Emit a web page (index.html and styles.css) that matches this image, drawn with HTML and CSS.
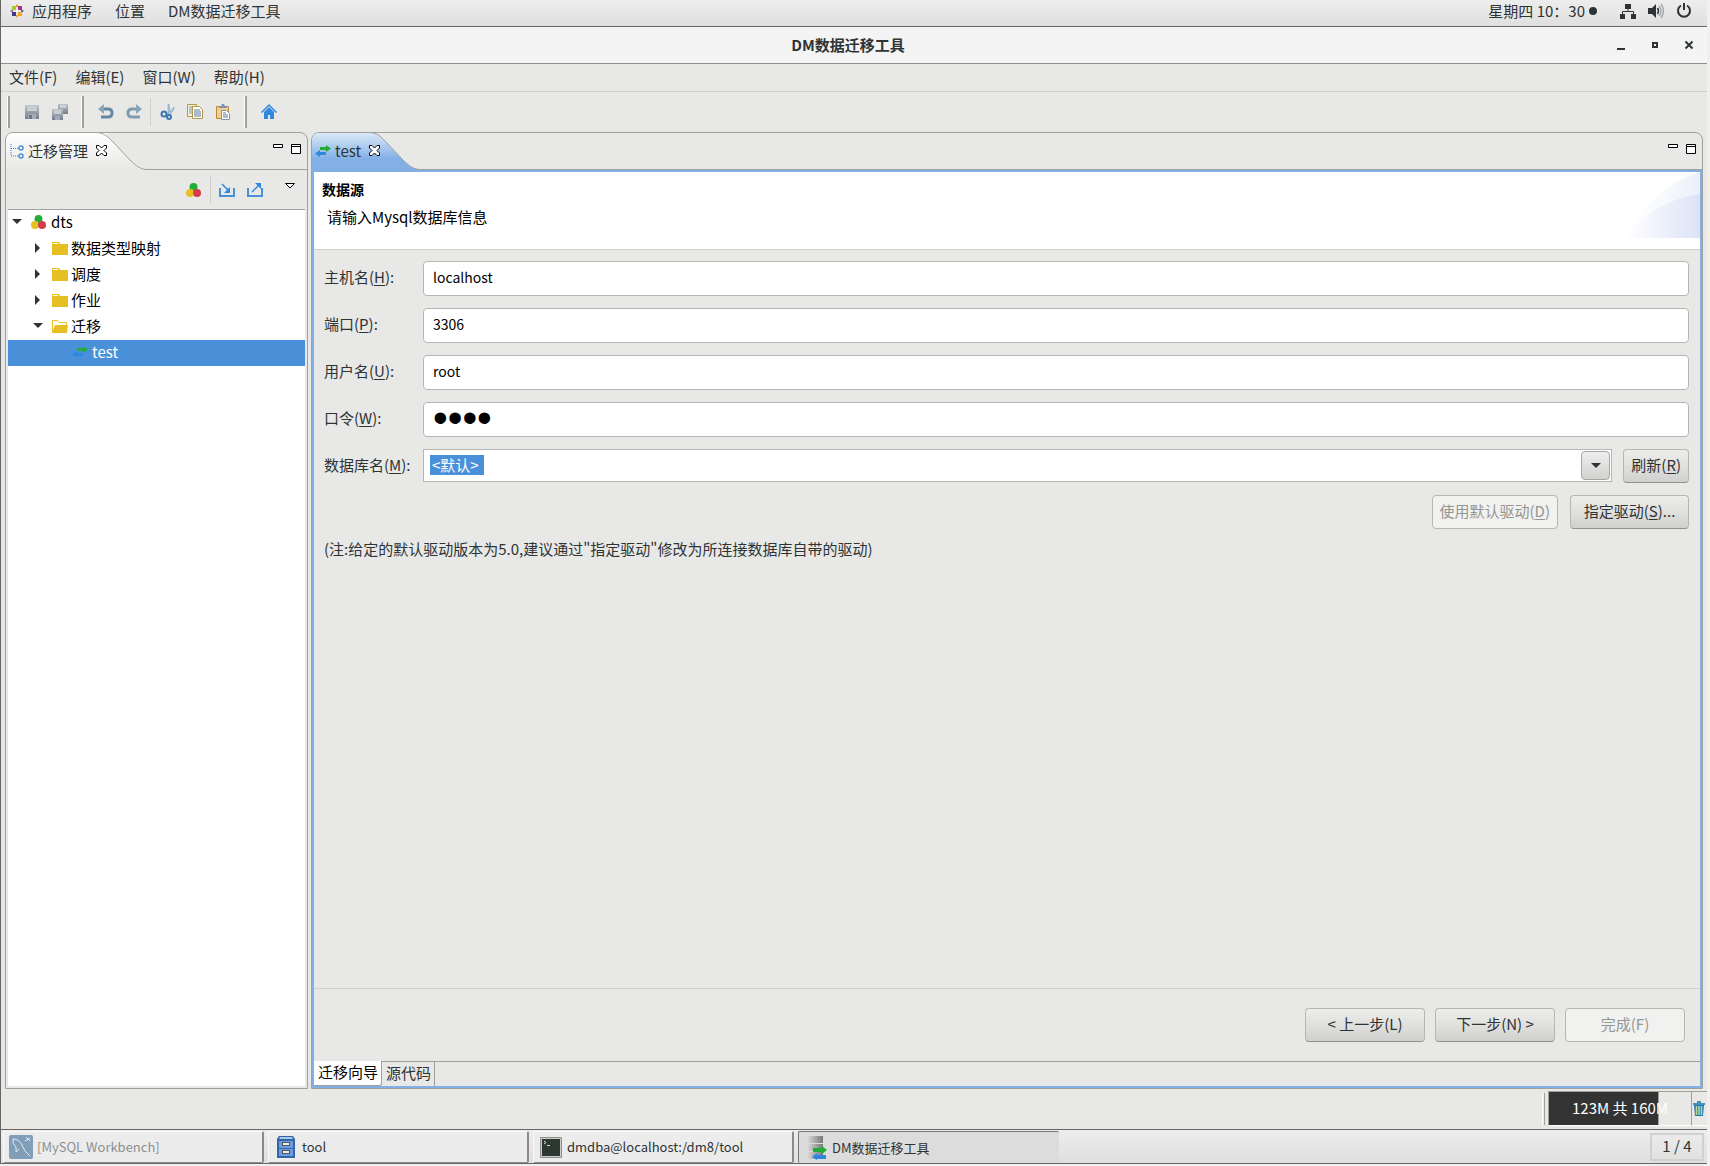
FILE: index.html
```html
<!DOCTYPE html>
<html lang="zh-CN">
<head>
    <meta charset="UTF-8">
    <title>DM数据迁移工具</title>
    <link rel="stylesheet" href="styles.css">
</head>
<body>
    <!-- shared icons -->
    <svg class="defs" width="0" height="0">
        <defs>
            <linearGradient id="gWhite" x2="0" y2="1"><stop offset="0" stop-color="#fff"/><stop offset="1" stop-color="#e8e8e6"/></linearGradient>
            <linearGradient id="gBlue" x2="0" y2="1"><stop offset="0" stop-color="#dce9f8"/><stop offset=".7" stop-color="#82b0e6"/><stop offset="1" stop-color="#82b0e6"/></linearGradient>
            <linearGradient id="gSwoosh"><stop offset="0" stop-color="#fff"/><stop offset="1" stop-color="#dce3f7"/></linearGradient>
            <linearGradient id="gGray"><stop offset="0" stop-color="#ddd"/><stop offset="1" stop-color="#777"/></linearGradient>
            <linearGradient id="gSteel" x2="0" y2="1"><stop offset="0" stop-color="#c0c4c8"/><stop offset="1" stop-color="#737c8c"/></linearGradient>
        </defs>
        <symbol id="balls" viewBox="0 0 16 16">
            <circle cx="7.500" cy="5" r="4" fill="#22ac38"/><circle cx="4" cy="11" r="4" fill="#e6bf22"/><circle cx="11" cy="11" r="4" fill="#d43c4c"/>
        </symbol>
        <symbol id="arrows" viewBox="0 0 16 16">
            <path d="M5 4h6V2l5 3.500L11 9V7H5z" fill="#22ac38"/><path d="M11 9H5V7L0 10.500 5 14v-2h6z" fill="#2f88dd"/>
        </symbol>
        <symbol id="folder" viewBox="0 0 16 16">
            <path d="M0 2h7l1 2h8v11H0z" fill="#e6bf22"/><path d="M1 3h5v1H1zM8 2h7v1H8z" fill="#fff"/>
        </symbol>
        <symbol id="folder-open" viewBox="0 0 16 16">
            <path d="M.5 14.500v-12h5l1.500 2h7.500V7" fill="#fff" stroke="#e6bf22"/><path d="M0 15l3-8h13l-1 8z" fill="#e6bf22"/>
        </symbol>
        <symbol id="close" viewBox="0 0 11 11">
            <path d="M.5.5h2.500L5.500 3 8 .5h2.500V3L8 5.500 10.500 8v2.500H8L5.500 8 3 10.500H.5V8L3 5.500.5 3z" fill="#fff" stroke="#000"/>
        </symbol>
        <symbol id="min" viewBox="0 0 10 10"><path d="M.5.5h9v3h-9z" fill="#fff" stroke="#000"/></symbol>
        <symbol id="max" viewBox="0 0 10 10"><path d="M.5.5h9v9h-9zM0 2.500h10" fill="#fff" stroke="#000"/></symbol>
        <symbol id="down" viewBox="0 0 10 6"><path d="M0 0h10L5 5z" fill="#2e3436"/></symbol>
        <symbol id="right" viewBox="0 0 6 10"><path d="M0 0v10l5-5z" fill="#2e3436"/></symbol>
        <symbol id="slant" viewBox="0 0 52 38">
            <path d="M0 .5C9 .5 12 4 18 10L35 28C41 34 46 37.500 52 37.500V38H0z" stroke="none"/>
            <path d="M0 .5C9 .5 12 4 18 10L35 28C41 34 46 37.500 52 37.500" fill="none" stroke="#a0a09c"/>
        </symbol>
    </svg>

    <div class="desktop">
        <header class="topbar">
            <svg width="14" height="14" viewBox="0 0 14 14">
                <path d="M7 0l2 3H5z" fill="#d9a022"/><path d="M7 14l2-3H5z" fill="#efa724"/><path d="M0 7l3-2v4z" fill="#b0559c"/><path d="M14 7l-3-2v4z" fill="#5a59a0"/>
                <rect x="2" y="2" width="4" height="4" fill="#9ccd2a"/><rect x="8" y="2" width="4" height="4" fill="#a8328e"/><rect x="2" y="8" width="4" height="4" fill="#3b3a8c"/><rect x="8" y="8" width="4" height="4" fill="#efa724"/><path d="M6 6h2v2H6z" fill="#fff"/>
            </svg>
            <a href="#" class="apps">应用程序</a>
            <a href="#">位置</a>
            <a href="#">DM数据迁移工具</a>
            <time class="clock">星期四 10：30<i class="dot"></i></time>
            <div class="tray">
                <svg width="16" height="16" viewBox="0 0 16 16"><path d="M5 1h6v5H5zM0 11h5v5H0zM11 11h5v5h-5z" fill="#2e3436"/><path d="M8 6v3M2.500 11V8.500h11V11" fill="none" stroke="#2e3436"/></svg>
                <svg width="16" height="16" viewBox="0 0 16 16"><path d="M0 5h4l4-4v14l-4-4H0z" fill="#2e3436"/><path d="M9.500 5q2 3 0 6" fill="none" stroke="#2e3436" stroke-width="1.500"/><path d="M11 3q4 5 0 10M13 1q5 7 0 14" fill="none" stroke="#aaa" stroke-width="1.500"/></svg>
                <svg width="16" height="16" viewBox="0 0 16 16"><path d="M5 2.500a6 6 0 1 0 6 0M8 0v7" fill="none" stroke="#2e3436" stroke-width="2"/></svg>
            </div>
        </header>

        <div class="titlebar">
            <h1>DM数据迁移工具</h1>
            <div class="win-buttons">
                <button aria-label="最小化"><svg width="10" height="10"><path d="M1 8h8v2H1z" fill="#2e3436"/></svg></button>
                <button aria-label="最大化"><svg width="10" height="10"><path d="M3 3h4v4H3z" fill="none" stroke="#2e3436" stroke-width="2"/></svg></button>
                <button aria-label="关闭"><svg width="10" height="10"><path d="M1.500 1.500l7 7M8.500 1.500l-7 7" stroke="#2e3436" stroke-width="2"/></svg></button>
            </div>
        </div>

        <nav class="menubar">
            <a href="#">文件(F)</a>
            <a href="#">编辑(E)</a>
            <a href="#">窗口(W)</a>
            <a href="#">帮助(H)</a>
        </nav>

        <div class="toolbar">
            <div class="group">
                <button aria-label="保存"><svg width="16" height="16"><path d="M1 1h14v14H1z" fill="url(#gSteel)"/><path d="M3 2h10v5H3z" fill="#c9cdd1"/><path d="M4 10h8v5H4z" fill="#a5abb3"/><path d="M5 11h3v4H5z" fill="#6d7686"/></svg></button>
                <button aria-label="全部保存"><svg width="16" height="16"><path d="M6 0h10v10H6z" fill="url(#gSteel)"/><path d="M8 1h6v3H8z" fill="#d0d3d6"/><path d="M0 5h11v11H0z" fill="url(#gSteel)"/><path d="M2 6h7v4H2z" fill="#c9cdd1"/><path d="M3 12h5v4H3z" fill="#a5abb3"/></svg></button>
            </div>
            <div class="group">
                <button aria-label="撤销"><svg width="16" height="16"><path d="M3 5h7q4 0 4 4t-4 4H3" fill="none" stroke="#6488a4" stroke-width="3"/><path d="M0 5l6-5v10z" fill="#8ba5b8"/></svg></button>
                <button aria-label="重做"><svg width="16" height="16"><path d="M13 5H6Q2 5 2 9t4 4h8" fill="none" stroke="#7f9cb0" stroke-width="3"/><path d="M16 5l-6-5v10z" fill="#8ba5b8"/></svg></button>
                <i class="line"></i>
                <button aria-label="剪切"><svg width="16" height="16"><path d="M9 10V0h1l1 8 4-5v2l-4 6z" fill="#a9c4d8" stroke="#6e9cc0" stroke-width=".5"/><circle cx="5" cy="10" r="2.500" fill="none" stroke="#3c78b4" stroke-width="2"/><circle cx="10" cy="13" r="2" fill="none" stroke="#3c78b4" stroke-width="2"/></svg></button>
                <button aria-label="复制"><svg width="16" height="16"><path d="M.5.5h9v12h-9z" fill="#f8f3d6" stroke="#b09a4a"/><path d="M2 3h4M2 5h4M2 7h4M2 9h4" stroke="#7f94b8"/><path d="M5.500 2.500h7l3 3v9h-10z" fill="#fffdf0" stroke="#b09a4a"/><path d="M7 6h6M7 8h7M7 10h7M7 12h7" stroke="#5878a8"/></svg></button>
                <button aria-label="粘贴"><svg width="16" height="16"><path d="M1.500 2.500h12v12h-12z" fill="#f0cf8c" stroke="#b88a3c"/><path d="M4 4V2h2l1-2h2l1 2h2v2z" fill="#8494a8"/><path d="M6.500 6.500h5l3 3v6h-8z" fill="#fff" stroke="#8494a8"/><path d="M8 9h3M8 11h5M8 13h5" stroke="#5878a8"/></svg></button>
            </div>
            <div class="group">
                <button aria-label="主页"><svg width="16" height="16"><path d="M8 0l8 8-1 1-7-7-7 7-1-1z" fill="#2f88dd"/><path d="M8 3l5 5v7H9v-4H7v4H3V8z" fill="#2f88dd"/></svg></button>
            </div>
        </div>

        <main class="workbench">
            <section class="panel explorer">
                <div class="panel-head">
                    <div class="tab">
                        <svg width="14" height="16"><path d="M1 1v12M1 5.500h8M1 13h8" fill="none" stroke="#2f88dd" stroke-dasharray="1 1"/><circle cx="11" cy="5" r="2" fill="none" stroke="#4a90d9" stroke-width="1.500"/><circle cx="11" cy="13" r="2" fill="none" stroke="#4a90d9" stroke-width="1.500"/></svg>
                        <span>迁移管理</span>
                        <button aria-label="关闭"><svg width="11" height="11"><use href="#close"/></svg></button>
                    </div>
                    <svg class="slant" width="52" height="38" fill="url(#gWhite)"><use href="#slant"/></svg>
                    <div class="panel-buttons">
                        <button aria-label="最小化"><svg width="10" height="10"><use href="#min"/></svg></button>
                        <button aria-label="最大化"><svg width="10" height="10"><use href="#max"/></svg></button>
                    </div>
                </div>
                <div class="view-toolbar">
                    <button aria-label="分组"><svg width="16" height="16"><use href="#balls"/></svg></button>
                    <i class="line"></i>
                    <button aria-label="导入"><svg width="16" height="16"><path d="M1 6v8h14V6" fill="none" stroke="#4a90d9" stroke-width="2"/><path d="M3 2l7 7" stroke="#2f88dd" stroke-width="1.500"/><path d="M11 5v6H5z" fill="#2f88dd"/></svg></button>
                    <button aria-label="导出"><svg width="16" height="16"><path d="M1 6v8h14V6" fill="none" stroke="#4a90d9" stroke-width="2"/><path d="M5 10l7-7" stroke="#2f88dd" stroke-width="1.500"/><path d="M8 1h6v6z" fill="#2f88dd"/></svg></button>
                    <button class="view-menu" aria-label="菜单"><svg width="10" height="6"><path d="M.5.5h9L5 5z" fill="#fff" stroke="#000"/></svg></button>
                </div>
                <ul class="tree">
                    <li><svg class="twist" width="10" height="6"><use href="#down"/></svg><svg width="16" height="16"><use href="#balls"/></svg>dts</li>
                    <li class="child"><svg class="twist closed" width="6" height="10"><use href="#right"/></svg><svg width="16" height="16"><use href="#folder"/></svg>数据类型映射</li>
                    <li class="child"><svg class="twist closed" width="6" height="10"><use href="#right"/></svg><svg width="16" height="16"><use href="#folder"/></svg>调度</li>
                    <li class="child"><svg class="twist closed" width="6" height="10"><use href="#right"/></svg><svg width="16" height="16"><use href="#folder"/></svg>作业</li>
                    <li class="child"><svg class="twist" width="10" height="6"><use href="#down"/></svg><svg width="16" height="16"><use href="#folder-open"/></svg>迁移</li>
                    <li class="leaf selected"><svg width="16" height="16"><use href="#arrows"/></svg>test</li>
                </ul>
            </section>

            <section class="panel editor">
                <div class="panel-head">
                    <div class="tab">
                        <svg width="16" height="16"><use href="#arrows"/></svg>
                        <span>test</span>
                        <button aria-label="关闭"><svg width="11" height="11"><use href="#close"/></svg></button>
                    </div>
                    <svg class="slant" width="52" height="38" fill="url(#gBlue)"><use href="#slant"/></svg>
                    <div class="panel-buttons">
                        <button aria-label="最小化"><svg width="10" height="10"><use href="#min"/></svg></button>
                        <button aria-label="最大化"><svg width="10" height="10"><use href="#max"/></svg></button>
                    </div>
                </div>
                <div class="editor-body">
                    <div class="banner">
                        <div>
                            <h2>数据源</h2>
                            <p>请输入Mysql数据库信息</p>
                        </div>
                        <svg width="74" height="66"><path d="M0 66Q28 12 74 0V66z" fill="url(#gSwoosh)" opacity=".4"/><path d="M30 45Q44 14 74 0V66H30z" fill="url(#gSwoosh)" opacity=".3"/><path d="M0 66Q28 28 74 22V66z" fill="url(#gSwoosh)"/></svg>
                    </div>
                    <form class="form">
                        <label for="host">主机名(<u>H</u>):</label>
                        <input id="host" type="text" value="localhost">
                        <label for="port">端口(<u>P</u>):</label>
                        <input id="port" type="text" value="3306">
                        <label for="user">用户名(<u>U</u>):</label>
                        <input id="user" type="text" value="root">
                        <label for="pwd">口令(<u>W</u>):</label>
                        <input id="pwd" type="password" value="root">
                        <label for="db">数据库名(<u>M</u>):</label>
                        <div class="db-row">
                            <div class="combo">
                                <select id="db"><option>&lt;默认&gt;</option></select>
                                <span class="combo-arrow"><svg width="10" height="6"><use href="#down"/></svg></span>
                            </div>
                            <button type="button" class="btn">刷新(<u>R</u>)</button>
                        </div>
                        <div class="drivers">
                            <button type="button" class="btn" disabled>使用默认驱动(<u>D</u>)</button>
                            <button type="button" class="btn">指定驱动(<u>S</u>)...</button>
                        </div>
                        <p class="note">(注:给定的默认驱动版本为5.0,建议通过"指定驱动"修改为所连接数据库自带的驱动)</p>
                    </form>
                    <div class="wizard-buttons">
                        <button class="btn">&lt; 上一步(L)</button>
                        <button class="btn">下一步(N) &gt;</button>
                        <button class="btn" disabled>完成(F)</button>
                    </div>
                    <div class="page-tabs">
                        <button class="active">迁移向导</button>
                        <button>源代码</button>
                    </div>
                </div>
            </section>
        </main>

        <div class="statusbar">
            <i class="grip"></i>
            <div class="heap"><span>123M 共 160M</span></div>
            <button class="trash" aria-label="回收"><svg width="12" height="16"><path d="M1 4h10l-1 11H2z" fill="#2378b4"/><path d="M3.500 5v9M6 5v9M8.500 5v9" stroke="#b8dca8" stroke-width="1.500"/><path d="M0 2h12v2H0zM4 0h4v2H4z" fill="#4690c0"/></svg></button>
        </div>

        <footer class="taskbar">
            <button class="task minimized">
                <svg width="24" height="24"><rect width="24" height="24" rx="2" fill="#809eb8"/><path d="M4 4q6 0 9 6l3 6 5 5M4 4q-1 5 3 8v5l3-3M17 2l4 4M16 6l5-3" fill="none" stroke="#e4edf4"/></svg>
                <span>[MySQL Workbench]</span>
            </button>
            <button class="task">
                <svg width="24" height="24"><path d="M5 1h14l2 3v19H3V4z" fill="#3465a4"/><path d="M6 2h12l1 2H5z" fill="#a5c8f0"/><path d="M5 6h14v7H5zM5 14h14v7H5z" fill="#6a9ce0"/><path d="M8 7h8v4H8zM8 15h8v4H8z" fill="#555"/><path d="M9 8h6v2H9zM9 16h6v2H9z" fill="#eee"/></svg>
                <span>tool</span>
            </button>
            <button class="task">
                <svg width="24" height="24"><rect x="1" y="2" width="22" height="21" rx="1" fill="#8c8e8a"/><rect x="2.500" y="3.500" width="19" height="18" fill="#2e3833" stroke="#ccc"/><path d="M5 6l2 1.500L5 9M8 10.500h3" fill="none" stroke="#d8e4d8"/></svg>
                <span>dmdba@localhost:/dm8/tool</span>
            </button>
            <button class="task current">
                <svg width="24" height="24"><path d="M3 0h16v7H3zM3 8h16v7H3zM3 16h16v7H3z" fill="url(#gGray)"/><path d="M9 12h9v-2l5 4-5 4v-2H9z" fill="#22ac38"/><path d="M22 19h-9v-2l-5 4 5 3v-1h9z" fill="#2f88dd"/></svg>
                <span>DM数据迁移工具</span>
            </button>
            <div class="workspace">1 / 4</div>
        </footer>
    </div>
</body>
</html>
```
FILE: styles.css
```css
* {
    box-sizing: border-box;
}
body {
    margin: 0;
    background: #f0f0ef;
    color: #2e3436;
    font-family: "Noto Sans CJK SC", sans-serif;
    font-size: 15px;
    line-height: 20px;
}
a {
    color: inherit;
    text-decoration: none;
}
u {
    text-underline-offset: 2px;
}
button, input, select {
    font: inherit;
    color: inherit;
    margin: 0;
}
button {
    background: none;
    border: none;
    padding: 0;
    white-space: nowrap;
}
svg {
    display: block;
    flex: none;
}
.defs {
    position: absolute;
}
.desktop {
    display: flex;
    flex-direction: column;
    min-height: calc(100vh - 2px);
    margin: 0 3px 2px 0;
    background: #e8e8e6;
    border-left: 1px solid #666;
    border-bottom: 1px solid #666;
}

/* gnome top bar */
.topbar {
    display: flex;
    align-items: center;
    gap: 23px;
    height: 27px;
    padding: 0 15px 4px 9px;
    background: linear-gradient(#ededed, #dfdfdf);
    border-bottom: 1px solid #666;
}
.topbar .apps {
    margin-left: -15px;
}
.clock {
    display: flex;
    align-items: center;
    margin-left: auto;
}
.dot {
    width: 8px;
    height: 8px;
    margin-left: 4px;
    border-radius: 50%;
    background: #2e3436;
}
.tray {
    display: flex;
    gap: 12px;
}

/* window title */
.titlebar {
    display: grid;
    grid-template-columns: 1fr auto 1fr;
    align-items: center;
    height: 37px;
    padding: 0 12px 1px 0;
    background: #f4f4f4;
    border-bottom: 1px solid #90908a;
}
.titlebar h1 {
    grid-column: 2;
    margin: 0;
    font-size: 15px;
    line-height: 20px;
}
.win-buttons {
    display: flex;
    justify-content: flex-end;
    gap: 24px;
    padding-right: 1px;
}
.menubar {
    display: flex;
    gap: 18px;
    height: 28px;
    padding: 3px 8px;
    border-bottom: 1px solid #d0d0ce;
}

.toolbar {
    display: flex;
    height: 40px;
    padding: 4px 7px;
}
.group {
    display: flex;
    align-items: center;
    gap: 12px;
    padding: 0 14px;
    border-left: 2px solid #a0a09c;
    box-shadow: -1px 0 #fff;
}
.line {
    width: 1px;
    height: 28px;
    margin: 0 -4px;
    background: #d0d0ce;
}

/* panels */
.workbench {
    display: flex;
    flex: 1;
    gap: 3px;
    padding: 0 4px;
}
.panel {
    display: flex;
    flex-direction: column;
    border: 1px solid #a0a09c;
    border-radius: 8px 8px 0 0;
}
.explorer {
    width: 303px;
    flex: none;
}
.editor {
    flex: 1;
    min-width: 0;
}
.panel-head {
    display: flex;
    height: 37px;
    box-shadow: inset 0 -1px #a0a09c;
}
.tab {
    display: flex;
    align-items: center;
    gap: 4px;
    padding: 0 0 2px 4px;
    border-radius: 7px 0 0 0;
    background: linear-gradient(#fff, #e8e8e6);
}
.tab button {
    position: relative;
    z-index: 1;
    margin-left: 4px;
}
.slant {
    margin: -1px 0 0 -12px;
}
.panel-buttons {
    display: flex;
    gap: 8px;
    margin-left: auto;
    padding: 11px 6px 0 0;
    align-items: flex-start;
}
.editor .tab {
    padding-left: 3px;
    background: linear-gradient(#dce9f8, #82b0e6 70%);
}
.view-toolbar {
    display: flex;
    align-items: center;
    justify-content: flex-end;
    gap: 12px;
    height: 40px;
    margin: 0 2px;
    padding-right: 10px;
    border-bottom: 1px solid #a0a09c;
}
.view-menu {
    align-self: flex-start;
    margin: 13px 0 0 10px;
}
.tree {
    flex: 1;
    margin: 0 2px 2px;
    padding: 0;
    list-style: none;
    background: #fff;
    color: #000;
}
.tree li {
    display: flex;
    align-items: center;
    gap: 4px;
    height: 26px;
    padding: 0 0 2px 4px;
}
.tree .child {
    gap: 3px;
    padding-left: 25px;
}
.tree .leaf {
    padding-left: 64px;
}
.tree .selected {
    background: #4a90d9;
    color: #fff;
}
.twist {
    margin-right: 5px;
}
.child .twist {
    margin-right: 6px;
}
.child .closed {
    margin: 0 8px 0 2px;
}

/* editor */
.editor-body {
    display: flex;
    flex-direction: column;
    flex: 1;
    border: 2px solid #82b0e6;
}
.banner {
    display: flex;
    justify-content: space-between;
    height: 78px;
    background: #fff;
    color: #000;
    border-bottom: 1px solid #d0d0ce;
}
.banner h2 {
    margin: 7px 0 0 8px;
    font-size: 14px;
}
.banner p {
    margin: 8px 0 0 13px;
}
.form {
    display: grid;
    grid-template-columns: 87px 1fr;
    align-items: center;
    align-content: start;
    gap: 12px;
    flex: 1;
    padding: 11px 11px 0 10px;
}
.form label {
    padding-bottom: 3px;
    white-space: nowrap;
}
.form input {
    width: 100%;
    height: 35px;
    padding: 0 9px 3px;
    background: #fff;
    color: #000;
    border: 1px solid #b6b6b3;
    border-radius: 4px;
    font-size: 14px;
}
.form input[type="password"] {
    font-family: "Liberation Sans", sans-serif;
    font-size: 42px;
    line-height: 32px;
}
.db-row {
    display: flex;
    gap: 11px;
}
.combo {
    display: flex;
    flex: 1;
    position: relative;
}
.combo select {
    flex: 1;
    height: 33px;
    padding: 0 32px 2px 8px;
    appearance: none;
    /* highlighted value */
    background: linear-gradient(#4a90d9, #4a90d9) 6px 5px / 54px 20px no-repeat #fff;
    color: #fff;
    border: 1px solid #b6b6b3;
    border-radius: 0;
}
.combo-arrow {
    position: absolute;
    top: 2px;
    right: 2px;
    display: grid;
    place-items: center;
    width: 29px;
    height: 29px;
    background: linear-gradient(#eee, #d2d2d0);
    border: 1px solid #a6a6a3;
    border-radius: 4px;
    pointer-events: none;
}
.btn {
    height: 34px;
    padding: 0 7px 2px;
    background: linear-gradient(#ededec, #e0e0de 50%, #d0d0ce);
    border: 1px solid #b6b6b3;
    border-bottom-color: #90908c;
    border-radius: 4px;
}
.btn:disabled {
    background: #f1f1f0;
    border-color: #b6b6b3;
    color: #949693;
}
.drivers {
    grid-column: 1 / -1;
    display: flex;
    justify-content: flex-end;
    gap: 12px;
}
.drivers .btn {
    min-width: 119px;
}
.drivers .btn:disabled {
    min-width: 126px;
}
.note {
    grid-column: 1 / -1;
    margin: -2px 0 0;
}
.wizard-buttons {
    display: flex;
    justify-content: flex-end;
    gap: 10px;
    padding: 19px 15px;
    border-top: 1px solid #d0d0ce;
}
.wizard-buttons .btn {
    width: 120px;
}
.page-tabs {
    display: flex;
    height: 25px;
    border-top: 1px solid #a0a09c;
}
.page-tabs button {
    padding: 0 3px 3px 4px;
    border-right: 1px solid #a0a09c;
}
.page-tabs .active {
    margin-top: -1px;
    background: #fff;
    color: #000;
    border-bottom: 1px solid #a0a09c;
    border-radius: 0 0 3px 0;
}

/* status line and task list */
.statusbar {
    display: flex;
    justify-content: flex-end;
    height: 40px;
    padding: 2px 0 3px;
}
.grip {
    width: 3px;
    margin: 2px 3px 1px 0;
    border-left: 1px solid #fff;
    border-right: 1px solid #a0a09c;
}
.heap {
    display: grid;
    place-items: center;
    width: 144px;
    padding-bottom: 2px;
    border: 1px solid #a0a09c;
    border-bottom-color: #fff;
    background: linear-gradient(90deg, #333 109px, #a0a09c 109px, #a0a09c 110px, #e8e8e6 110px);
    color: #fff;
}
.trash {
    width: 15px;
    padding-left: 1px;
    border-top: 1px solid #a0a09c;
    border-bottom: 1px solid #fff;
}
.taskbar {
    display: flex;
    gap: 4px;
    height: 34px;
    padding: 1px 3px 0 2px;
    background: linear-gradient(#ededed, #dfdfdf);
    border-top: 1px solid #666;
}
.task {
    display: flex;
    align-items: center;
    gap: 4px;
    width: 261px;
    padding-left: 5px;
    background: #ececec;
    border: 1px solid #f8f8f8;
    border-right: 2px solid #8a8a8a;
    border-bottom: 1px solid #8a8a8a;
    border-radius: 2px;
    font-size: 13px;
}
.task.minimized {
    color: #8c8e8c;
}
.task.current {
    background: #dcdcdc;
    border: 0 solid #777;
    border-width: 1px 0 0 1px;
}
.workspace {
    align-self: center;
    min-width: 54px;
    margin-left: auto;
    padding: 1px 7px 3px;
    border: 2px solid #d0d0ce;
    text-align: center;
}
```
